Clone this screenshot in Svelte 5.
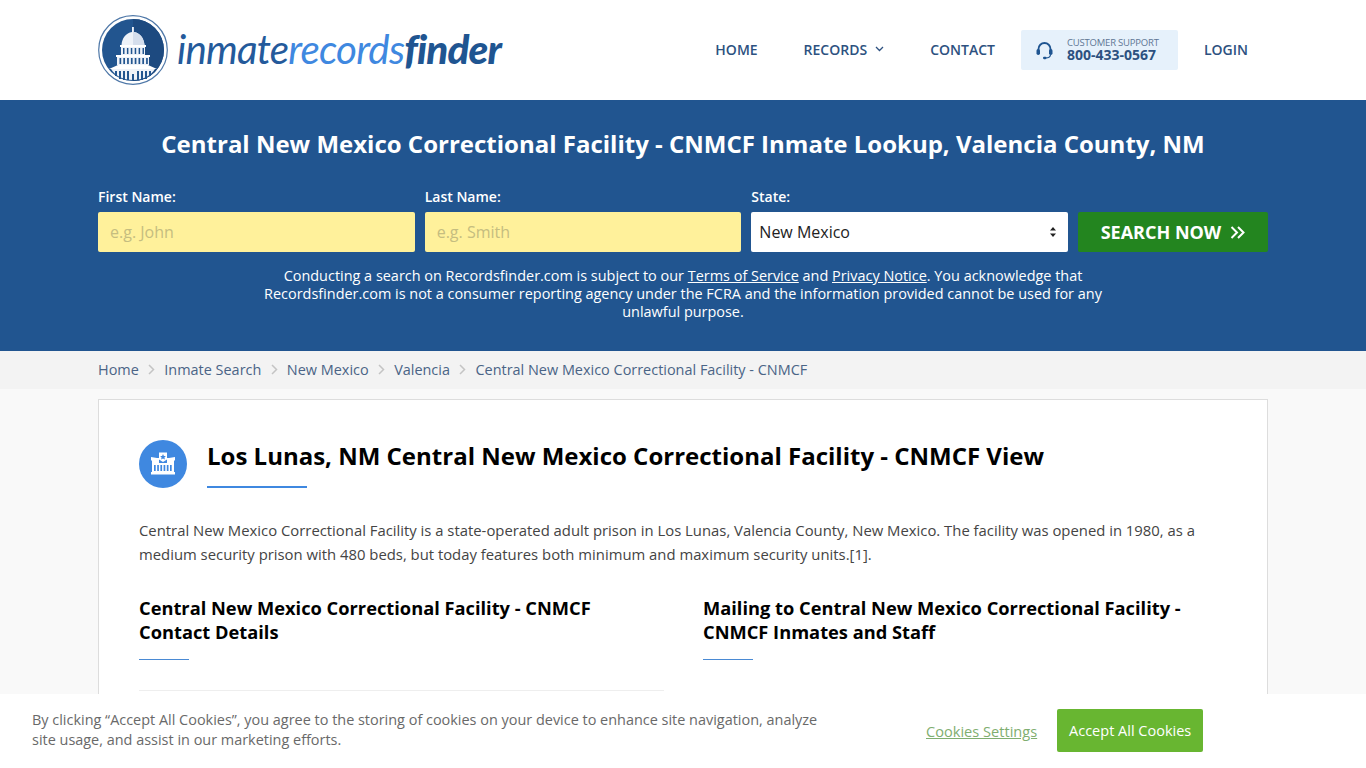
<script>
  const crumbs = ["Home", "Inmate Search", "New Mexico", "Valencia", "Central New Mexico Correctional Facility - CNMCF"];
  const columns = [0, 1, 2, 3, 4, 5, 6, 7];
</script>

<header class="top">
  <div class="wrap top-row">
    <a class="logo" href="#home">
      <svg width="70" height="70" viewBox="0 0 70 70" aria-hidden="true">
        <circle cx="35" cy="35" r="34.3" fill="#fff" stroke="#4f78a8" stroke-width="1.2" />
        <circle cx="35" cy="35" r="31" fill="#22558f" />
        <path d="M35 4a31 31 0 0 1 31 31 31 31 0 0 1-31 31z" fill="#1d4a80" />
        <path d="M34 12h2v5c6 1 10 6 10.500 13h-23c.5-7 4.500-12 10.500-13z" fill="#eef2f8" />
        <path d="M35 12h1v5c6 1 10 6 10.500 13H35z" fill="#d5deec" />
        <rect x="22" y="30" width="26" height="2" fill="#fff" />
        <rect x="23" y="32" width="24" height="8" fill="#eef2f8" />
        <rect x="18" y="40" width="34" height="2" fill="#fff" />
        <rect x="19" y="42" width="32" height="8" fill="#eef2f8" />
        <path d="M11 54l9-4h30l9 4z" fill="#fff" />
        <path d="M13 54h44c-4.500 7-12 11-22 11s-17.500-4-22-11z" fill="#eef2f8" />
        <g fill="#22558f">
          {#each columns as c}
            <rect x={21.500 + c * 3.800} y="43" width="1.700" height="6" />
          {/each}
          {#each columns.slice(0, 6) as c}
            <rect x={25 + c * 3.900} y="33" width="1.500" height="6" />
          {/each}
          <rect x="17" y="56" width="2" height="5" />
          <rect x="21" y="56" width="2" height="8" />
          <rect x="25" y="56" width="2" height="9" />
          <rect x="29" y="56" width="2" height="9" />
          <rect x="34" y="59" width="2" height="6" />
          <rect x="39" y="56" width="2" height="9" />
          <rect x="43" y="56" width="2" height="9" />
          <rect x="47" y="56" width="2" height="8" />
          <rect x="51" y="56" width="2" height="5" />
        </g>
      </svg>
      <span class="wordmark"><span class="w1">inmate</span><span class="w2">records</span><span class="w3">finder</span></span>
    </a>
    <nav class="nav">
      <a class="nav-link home" href="#home">HOME</a>
      <a class="nav-link records" href="#records">RECORDS
        <svg width="9" height="6" viewBox="0 0 9 6" aria-hidden="true"><path d="M1 1l3.500 3.500L8 1" fill="none" stroke="#2d5180" stroke-width="1.300" /></svg>
      </a>
      <a class="nav-link contact" href="#contact">CONTACT</a>
      <div class="support">
        <svg width="17" height="19" viewBox="0 0 17 19" aria-hidden="true">
          <path d="M2.500 10V8a6 6 0 0 1 12 0v2" fill="none" stroke="#1f5591" stroke-width="1.800" />
          <rect x="0.500" y="8" width="3.500" height="6" rx="1.700" fill="#1f5591" />
          <rect x="13" y="8" width="3.500" height="6" rx="1.700" fill="#1f5591" />
          <path d="M14.500 13.500c0 2.500-2 3.500-5 3.500" fill="none" stroke="#1f5591" stroke-width="1.200" />
          <rect x="7" y="15.800" width="3.500" height="2.400" rx="1.100" fill="#1f5591" />
        </svg>
        <div class="support-text">
          <span class="support-label">CUSTOMER SUPPORT</span>
          <span class="support-phone">800-433-0567</span>
        </div>
      </div>
      <a class="nav-link login" href="#login">LOGIN</a>
    </nav>
  </div>
</header>

<section class="banner">
  <div class="wrap">
    <h1>Central New Mexico Correctional Facility - CNMCF Inmate Lookup, Valencia County, NM</h1>
    <form class="search" onsubmit={(e) => e.preventDefault()}>
      <label class="field">
        <span>First Name:</span>
        <input type="text" placeholder="e.g. John" />
      </label>
      <label class="field">
        <span>Last Name:</span>
        <input type="text" placeholder="e.g. Smith" />
      </label>
      <label class="field">
        <span>State:</span>
        <div class="select-box">
          <select>
            <option>New Mexico</option>
          </select>
          <svg class="select-arrows" width="6" height="10" viewBox="0 0 6 10" aria-hidden="true">
            <path d="M3 0l3 3.500H0zM3 10L0 6.500h6z" fill="#222" />
          </svg>
        </div>
      </label>
      <button class="search-btn" type="submit">
        SEARCH NOW
        <svg width="15" height="13" viewBox="0 0 15 13" aria-hidden="true">
          <path d="M1.500 1l5.500 5.500L1.500 12M8 1l5.500 5.500L8 12" fill="none" stroke="#fff" stroke-width="2" />
        </svg>
      </button>
    </form>
    <p class="notice">
      Conducting a search on Recordsfinder.com is subject to our <a href="#terms">Terms of Service</a> and <a href="#privacy">Privacy Notice</a>. You acknowledge that Recordsfinder.com is not a consumer reporting agency under the FCRA and the information provided cannot be used for any unlawful purpose.
    </p>
  </div>
</section>

<div class="crumbs">
  <div class="wrap crumb-row">
    {#each crumbs as crumb, i}
      {#if i > 0}
        <svg class="crumb-sep" width="7" height="11" viewBox="0 0 7 11" aria-hidden="true"><path d="M1 1l4.500 4.500L1 10" fill="none" stroke="#c4c4c4" stroke-width="1.500" /></svg>
      {/if}
      <a href="#crumb">{crumb}</a>
    {/each}
  </div>
</div>

<main class="wrap">
  <article class="card">
    <div class="title-row">
      <div class="title-icon">
        <svg width="26" height="26" viewBox="0 0 26 26" aria-hidden="true">
          <path d="M1 6l6 1h2v5h8V7h2l6-1v3.500h-1V21h1v2.500H1V21h1V9.500H1z" fill="#fff" />
          <path d="M9 1.500h8v7L13 11 9 8.500z" fill="#fff" />
          <path d="M13 3l.9 1.900 2 .2-1.500 1.300.5 2-1.900-1-1.900 1 .5-2-1.500-1.300 2-.2z" fill="#3f88e0" />
          <g fill="#3f88e0">
            <rect x="4" y="14" width="1.700" height="6" />
            <rect x="7.200" y="14" width="1.700" height="6" />
            <rect x="10.400" y="14" width="1.700" height="6" />
            <rect x="13.600" y="14" width="1.700" height="6" />
            <rect x="16.800" y="14" width="1.700" height="6" />
            <rect x="20" y="14" width="1.700" height="6" />
          </g>
        </svg>
      </div>
      <div class="title-block">
        <h2>Los Lunas, NM Central New Mexico Correctional Facility - CNMCF View</h2>
        <div class="title-rule"></div>
      </div>
    </div>
    <p class="intro">Central New Mexico Correctional Facility is a state-operated adult prison in Los Lunas, Valencia County, New Mexico. The facility was opened in 1980, as a medium security prison with 480 beds, but today features both minimum and maximum security units.[1].</p>
    <div class="columns">
      <div class="col">
        <h3>Central New Mexico Correctional Facility - CNMCF Contact Details</h3>
        <div class="col-rule"></div>
        <div class="col-line"></div>
      </div>
      <div class="col">
        <h3>Mailing to Central New Mexico Correctional Facility - CNMCF Inmates and Staff</h3>
        <div class="col-rule"></div>
      </div>
    </div>
  </article>
</main>

<aside class="cookies">
  <p>By clicking “Accept All Cookies”, you agree to the storing of cookies on your device to enhance site navigation, analyze site usage, and assist in our marketing efforts.</p>
  <a class="cookie-settings" href="#settings">Cookies Settings</a>
  <button class="cookie-accept" type="button">Accept All Cookies</button>
</aside>

<style>
  :global(html), :global(body) {
    height: 768px;
    overflow: hidden;
  }
  :global(body) {
    background: #f9f9f9;
    font-family: "Open Sans", sans-serif;
    color: #444;
  }
  .wrap {
    width: 1170px;
    margin: 0 auto;
  }
  a {
    color: inherit;
    text-decoration: none;
  }

  .top {
    height: 100px;
    background: #fff;
  }
  .top-row {
    display: flex;
    align-items: center;
    justify-content: space-between;
    height: 100px;
  }
  .logo {
    display: flex;
    align-items: center;
    gap: 9px;
  }
  .wordmark {
    font-family: Lato, sans-serif;
    font-size: 40.300px;
    font-style: italic;
    letter-spacing: -0.800px;
    line-height: 40px;
    padding-bottom: 3px;
  }
  .w1 {
    color: #245a9b;
    font-weight: 400;
  }
  .w2 {
    color: #3f88e0;
    font-weight: 400;
  }
  .w3 {
    color: #1f5591;
    font-weight: 900;
  }
  .nav {
    display: flex;
    align-items: center;
    height: 40px;
    margin-right: 20px;
  }
  .nav-link {
    position: relative;
    top: -1px;
    font-size: 14px;
    font-weight: 600;
    color: #2d5180;
  }
  .records {
    margin-left: 46px;
    display: flex;
    align-items: center;
    gap: 8px;
  }
  .contact {
    margin-left: 46px;
  }
  .support {
    display: flex;
    align-items: center;
    gap: 14px;
    width: 157px;
    height: 40px;
    box-sizing: border-box;
    margin-left: 26px;
    padding-left: 15px;
    background: #e6f1fb;
    border-radius: 2px;
  }
  .support-text {
    display: flex;
    flex-direction: column;
    margin-top: -2px;
  }
  .support-label {
    font-size: 9.500px;
    line-height: 11px;
    color: #5f7694;
    letter-spacing: -0.200px;
    white-space: nowrap;
  }
  .support-phone {
    font-size: 14px;
    line-height: 14px;
    font-weight: 700;
    color: #2d5180;
  }
  .login {
    margin-left: 26px;
  }

  .banner {
    height: 251px;
    box-sizing: border-box;
    padding-top: 27px;
    background: #215590;
    color: #fff;
  }
  h1 {
    margin: 0;
    font-size: 24px;
    line-height: 33px;
    font-weight: 700;
    text-align: center;
    white-space: nowrap;
  }
  .search {
    display: grid;
    grid-template-columns: 1fr 1fr 1fr 190px;
    gap: 10px;
    align-items: end;
    margin-top: 27px;
  }
  .field {
    display: flex;
    flex-direction: column;
    gap: 6px;
  }
  .field span {
    font-size: 14px;
    line-height: 19px;
    font-weight: 600;
  }
  .field input {
    width: 100%;
    height: 40px;
    box-sizing: border-box;
    padding: 0 12px;
    border: 0;
    border-radius: 2px;
    background: #fff19b;
    font: 16px "Open Sans", sans-serif;
  }
  .field input::placeholder {
    color: #c5bd80;
    opacity: 1;
  }
  .select-box {
    position: relative;
  }
  .select-box select {
    appearance: none;
    -webkit-appearance: none;
    display: block;
    width: 100%;
    height: 40px;
    padding: 0 8px;
    border: 0;
    border-radius: 2px;
    background: #fff;
    color: #222;
    font: 16px "Open Sans", sans-serif;
  }
  .select-arrows {
    position: absolute;
    top: 15px;
    right: 12px;
    pointer-events: none;
  }
  .search-btn {
    display: flex;
    align-items: center;
    justify-content: center;
    gap: 9px;
    height: 40px;
    padding: 0;
    border: 0;
    border-radius: 2px;
    background: #23851f;
    color: #fff;
    font: 700 18px "Open Sans", sans-serif;
  }
  .notice {
    width: 860px;
    margin: 15px auto 0;
    font-size: 14.450px;
    line-height: 18px;
    font-weight: 400;
    text-align: center;
  }
  .notice a {
    text-decoration: underline;
  }

  .crumbs {
    height: 38px;
    background: #f3f3f3;
  }
  .crumb-row {
    display: flex;
    align-items: center;
    height: 36px;
    font-size: 14.450px;
    color: #4a6486;
  }
  .crumb-sep {
    margin: 1px 9px 0 9.500px;
  }

  .card {
    height: 420px;
    box-sizing: border-box;
    margin-top: 10px;
    padding: 40px 40px;
    background: #fff;
    border: 1px solid #ddd;
  }
  .title-row {
    display: flex;
    gap: 20px;
  }
  .title-icon {
    display: flex;
    align-items: center;
    justify-content: center;
    width: 48px;
    height: 48px;
    border-radius: 50%;
    background: #3f88e0;
  }
  .title-block {
    flex: 1;
  }
  h2 {
    margin: -1px 0 0;
    font-size: 24px;
    line-height: 33px;
    font-weight: 700;
    color: #000;
  }
  .title-rule {
    width: 100px;
    height: 2px;
    margin-top: 14px;
    background: #3f88e0;
  }
  .intro {
    margin: 30px 0 0;
    font-size: 14.850px;
    line-height: 24px;
    color: #444;
  }
  .columns {
    display: grid;
    grid-template-columns: 525px 525px;
    gap: 39px;
    margin-top: 30px;
  }
  h3 {
    margin: 0;
    font-size: 18.270px;
    line-height: 24px;
    font-weight: 700;
    color: #000;
  }
  .col-rule {
    width: 50px;
    height: 1px;
    margin-top: 15px;
    background: #4a8ad4;
  }
  .col-line {
    height: 1px;
    margin-top: 30px;
    background: #eee;
  }

  .cookies {
    position: fixed;
    left: 0;
    right: 0;
    bottom: 0;
    display: flex;
    align-items: center;
    height: 74px;
    box-sizing: border-box;
    padding: 0 0 1px 32px;
    background: #fff;
  }
  .cookies p {
    position: relative;
    top: -1px;
    width: 800px;
    margin: 0;
    font-size: 14.450px;
    line-height: 20px;
    color: #696969;
  }
  .cookie-settings {
    margin-left: 94px;
    font-size: 14.600px;
    color: #7fae70;
    text-decoration: underline;
    white-space: nowrap;
  }
  .cookie-accept {
    width: 146px;
    height: 43px;
    margin-left: 20px;
    padding: 0;
    border: 0;
    border-radius: 2px;
    background: #68b631;
    color: #fff;
    font: 14.500px "Open Sans", sans-serif;
  }
</style>
